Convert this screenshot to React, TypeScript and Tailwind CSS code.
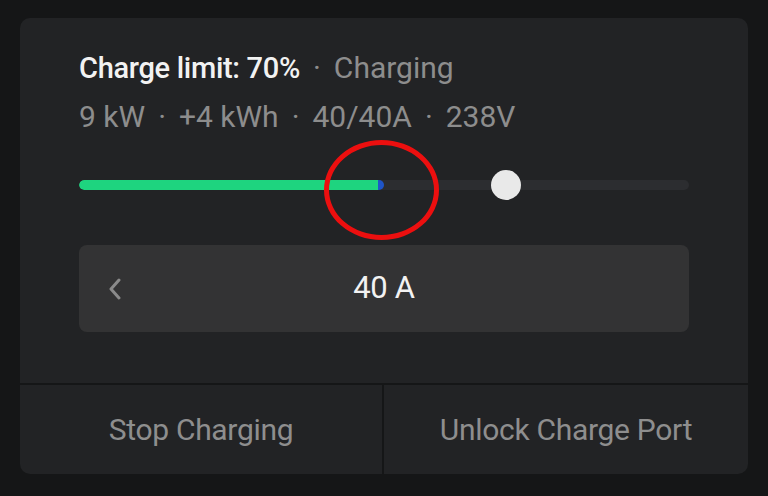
const App = () => {
    return (
        <div
            className="w-[768px] h-[496px] bg-[#151617] pt-[18px] px-[20px] overflow-hidden"
            style={{ fontFamily: 'Roboto, "Liberation Sans", sans-serif' }}
        >
            <div className="relative h-[456px] bg-[#222325] rounded-[10px] flex flex-col overflow-hidden">
                <div className="px-[59px] pt-[34px] h-[365px]">
                    {/* Status lines */}
                    <p className="h-[32px] leading-[32px] text-[29px] font-medium text-[#f2f2f2] tracking-[-0.3px] whitespace-nowrap">
                        Charge limit: 70%
                        <span className="text-[30px] text-[#8d8d8d] font-normal tracking-normal ml-[13px] mr-[13px]">·</span>
                        <span className="text-[30px] text-[#8d8d8d] font-normal tracking-normal">Charging</span>
                    </p>
                    <p className="mt-[17px] h-[32px] leading-[32px] text-[30px] text-[#8d8d8d] whitespace-nowrap">
                        9 kW<span className="mx-[13px]">·</span>+4 kWh<span className="mx-[13px]">·</span>40/40A<span className="mx-[13px]">·</span>238V
                    </p>

                    {/* Charge slider */}
                    <div className="relative mt-[37px] h-[30px] flex items-center">
                        <div className="w-full h-[10px] rounded-full bg-[#2c2d30] flex overflow-hidden">
                            <div className="w-[299px] h-full bg-[#1ed47f] rounded-l-full" />
                            <div className="w-[6px] h-full bg-[#1f55c8] rounded-r-full" />
                        </div>
                        <div className="absolute left-[412px] top-0 w-[30px] h-[30px] rounded-full bg-[#e9e9e9]" />
                    </div>

                    {/* Current selector */}
                    <div className="mt-[45px] h-[87px] rounded-[8px] bg-[#333334] relative flex items-center justify-center">
                        <svg
                            className="absolute left-[28px] top-[33px]"
                            width="16"
                            height="22"
                            viewBox="0 0 16 22"
                            fill="none"
                        >
                            <path
                                d="M12 2 L4 11 L12 20"
                                stroke="#8a8a8a"
                                strokeWidth="3"
                                strokeLinecap="round"
                                strokeLinejoin="round"
                            />
                        </svg>
                        <span className="text-[31px] text-[#f2f2f2] tracking-[-0.3px]">40 A</span>
                    </div>
                </div>

                {/* Actions */}
                <div className="flex-1 grid grid-cols-2 border-t-2 border-[#151617]">
                    <div className="flex items-center justify-center border-r-2 border-[#151617] text-[30px] text-[#8e8e8e] tracking-[-0.3px]">
                        Stop Charging
                    </div>
                    <div className="flex items-center justify-center text-[30px] text-[#8e8e8e] tracking-[-0.3px]">
                        Unlock Charge Port
                    </div>
                </div>

                {/* Annotation */}
                <div className="absolute left-[304px] top-[122px] w-[115px] h-[100px] rounded-[50%] border-[5px] border-[#ec0f0f]" />
            </div>
        </div>
    );
};

export default App;
